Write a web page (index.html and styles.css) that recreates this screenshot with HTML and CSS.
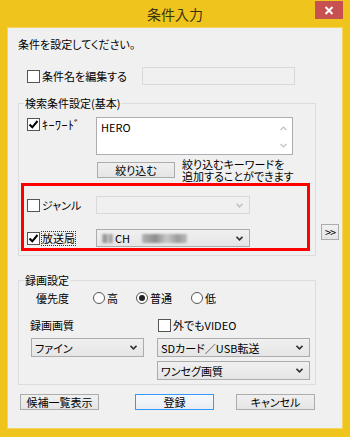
FILE: index.html
```html
<!DOCTYPE html>
<html lang="ja">
<head>
    <meta charset="UTF-8">
    <title>条件入力</title>
    <link rel="stylesheet" href="styles.css">
</head>
<body>
    <div class="window">
        <div class="titlebar">
            <div class="title">条件入力</div>
            <div class="close">
                <svg width="10" height="9" viewBox="0 0 10 9"><path d="M1.5 1 L8.5 8 M8.5 1 L1.5 8" /></svg>
            </div>
        </div>

        <div class="client">
            <p class="intro">条件を設定してください。</p>

            <div class="name-row">
                <label class="check name-check"><span class="box"></span>条件名を編集する</label>
                <div class="textbox"></div>
            </div>

            <div class="search-row">
                <fieldset class="group search">
                    <legend>検索条件設定(基本)</legend>
                    <div class="kw-row">
                        <label class="check kw-check"><span class="box on"><svg width="11" height="11" viewBox="0 0 11 11"><path d="M1.5 5.5 L4.3 8.3 L9.5 2" /></svg></span><span class="kw-text">ｷｰﾜｰﾄﾞ</span></label>
                        <div class="textarea">
                            <div class="ta-text">HERO</div>
                            <div class="ta-scroll">
                                <svg width="7" height="5" viewBox="0 0 7 5"><path d="M0.5 4 L3.5 1 L6.5 4" /></svg>
                                <svg width="7" height="5" viewBox="0 0 7 5"><path d="M0.5 1 L3.5 4 L6.5 1" /></svg>
                            </div>
                        </div>
                    </div>
                    <div class="narrow-row">
                        <button class="btn narrow">絞り込む</button>
                        <p class="hint">絞り込むキーワードを<br>追加することができます</p>
                    </div>
                    <div class="highlight">
                        <div class="sel-row">
                            <label class="check"><span class="box"></span>ジャンル</label>
                            <div class="combo disabled">
                                <span></span>
                                <svg class="chev" width="7" height="5" viewBox="0 0 7 5"><path d="M0.5 0.8 L3.5 3.8 L6.5 0.8" /></svg>
                            </div>
                        </div>
                        <div class="sel-row station-row">
                            <label class="check"><span class="box on"><svg width="11" height="11" viewBox="0 0 11 11"><path d="M1.5 5.5 L4.3 8.3 L9.5 2" /></svg></span><span class="focus">放送局</span></label>
                            <div class="combo">
                                <span class="combo-text"><span class="blur short"></span>CH<span class="blur long"></span></span>
                                <svg class="chev" width="7" height="5" viewBox="0 0 7 5"><path d="M0.5 0.8 L3.5 3.8 L6.5 0.8" /></svg>
                            </div>
                        </div>
                    </div>
                </fieldset>
                <button class="btn more">&gt;&gt;</button>
            </div>

            <fieldset class="group record">
                <legend>録画設定</legend>
                <div class="priority-row">
                    <span class="priority-label">優先度</span>
                    <label class="radio r-high"><span class="dot"></span>高</label>
                    <label class="radio r-normal"><span class="dot on"></span>普通</label>
                    <label class="radio"><span class="dot"></span>低</label>
                </div>
                <div class="quality-row">
                    <span class="quality-label">録画画質</span>
                    <label class="check"><span class="box"></span>外でもVIDEO</label>
                </div>
                <div class="combo-row">
                    <div class="combo quality">
                        <span class="combo-text">ファイン</span>
                        <svg class="chev" width="7" height="5" viewBox="0 0 7 5"><path d="M0.5 0.8 L3.5 3.8 L6.5 0.8" /></svg>
                    </div>
                    <div class="combo wide">
                        <span class="combo-text">SDカード／USB転送</span>
                        <svg class="chev" width="7" height="5" viewBox="0 0 7 5"><path d="M0.5 0.8 L3.5 3.8 L6.5 0.8" /></svg>
                    </div>
                </div>
                <div class="combo-row second">
                    <div class="combo wide">
                        <span class="combo-text">ワンセグ画質</span>
                        <svg class="chev" width="7" height="5" viewBox="0 0 7 5"><path d="M0.5 0.8 L3.5 3.8 L6.5 0.8" /></svg>
                    </div>
                </div>
            </fieldset>

            <div class="actions">
                <button class="btn">候補一覧表示</button>
                <button class="btn default">登録</button>
                <button class="btn">キャンセル</button>
            </div>
        </div>
    </div>
</body>
</html>
```

FILE: styles.css
```css
* {
    margin: 0;
    padding: 0;
    box-sizing: border-box;
}
body {
    width: 350px;
    height: 437px;
    overflow: hidden;
    background: #efc41c;
    font-family: "Noto Sans CJK JP", "Noto Sans", sans-serif;
    font-size: 11px;
    line-height: 16px;
    color: #000;
    font-feature-settings: "palt";
}
.titlebar {
    display: grid;
    grid-template-columns: 1fr auto 1fr;
    height: 28px;
}
.title {
    grid-column: 2;
    align-self: center;
    font-size: 14px;
    line-height: 18px;
    color: #3d3512;
}
.close {
    grid-column: 3;
    justify-self: end;
    align-self: start;
    display: flex;
    align-items: center;
    justify-content: center;
    width: 28px;
    height: 18px;
    margin: 1px 7px 0 0;
    background: #c75050;
}
.close path {
    stroke: #fff;
    stroke-width: 2;
    fill: none;
}
.client {
    height: 400px;
    margin: 0 8px;
    padding: 8px 0 0 10px;
    background: #f0f0f0;
    box-shadow: 0 0 0 1px #f3d560;
}
.intro {
    height: 16px;
}

/* checkboxes and radios */
.check {
    display: flex;
    align-items: center;
}
.box {
    display: flex;
    align-items: center;
    justify-content: center;
    width: 13px;
    height: 13px;
    margin-right: 2px;
    border: 1px solid #555;
    background: #fff;
}
.box path {
    stroke: #000;
    stroke-width: 2;
    fill: none;
}
.radio {
    display: flex;
    align-items: center;
}
.dot {
    display: flex;
    align-items: center;
    justify-content: center;
    width: 12px;
    height: 12px;
    margin-right: 2px;
    border: 1px solid #555;
    border-radius: 50%;
    background: #fff;
}
.dot.on::after {
    content: "";
    width: 6px;
    height: 6px;
    border-radius: 50%;
    background: #222;
}

/* inputs */
.name-row {
    display: flex;
    align-items: center;
    height: 18px;
    margin-top: 15px;
    padding-left: 9px;
}
.name-check {
    width: 115px;
}
.textbox {
    width: 153px;
    height: 18px;
    border: 1px solid #d9d9d9;
    background: #f0f0f0;
}
.textarea {
    display: flex;
    width: 197px;
    height: 38px;
    border: 1px solid #abadb3;
    background: #fff;
}
.ta-text {
    flex: 1;
    padding: 1px 4px;
}
.ta-scroll {
    display: flex;
    flex-direction: column;
    justify-content: space-between;
    align-items: center;
    width: 17px;
    padding: 8px 0 6px;
}
.ta-scroll path {
    stroke: #c2c2c2;
    stroke-width: 1.2;
    fill: none;
}
.combo {
    display: flex;
    align-items: center;
    justify-content: space-between;
    height: 19px;
    padding: 0 6px 0 3px;
    border: 1px solid #acacac;
    background: linear-gradient(#f0f0f0, #e5e5e5);
}
.combo-text {
    display: flex;
    align-items: center;
}
.chev path {
    stroke: #333;
    stroke-width: 1.6;
    fill: none;
}
.combo.disabled {
    border-color: #d9d9d9;
    background: #f0f0f0;
}
.combo.disabled .chev path {
    stroke: #c4c4c4;
}
.blur {
    display: inline-block;
    height: 9px;
    background: linear-gradient(90deg, #b4b4b4, #8c8c8c 30%, #c8c8c8 55%, #9a9a9a 80%, #bdbdbd);
    filter: blur(0.8px);
}
.blur.short {
    width: 11px;
    margin: 0 2px 0 2px;
}
.blur.long {
    width: 45px;
    margin-left: 12px;
}

/* buttons */
.btn {
    height: 16px;
    font: inherit;
    line-height: 14px;
    color: #000;
    border: 1px solid #acacac;
    background: linear-gradient(#f0f0f0, #e5e5e5);
}
.btn.default {
    border-color: #3399ff;
    background: linear-gradient(#f6f8fb, #e9eef4);
}

/* group boxes */
.group {
    width: 298px;
    padding: 0 0 4px 0;
    border: 1px solid #dcdcdc;
}
.group legend {
    margin-left: 5px;
    padding: 0 1px;
    line-height: 16px;
}
.search-row {
    display: flex;
    align-items: flex-start;
    margin-top: 10px;
}
.kw-row {
    display: flex;
    margin-top: 6px;
    padding-left: 8px;
}
.kw-check {
    align-items: flex-start;
    width: 69px;
    padding-top: 1px;
    line-height: 13px;
}
.kw-text {
    font-size: 12px;
    font-feature-settings: normal;
    letter-spacing: 0.5px;
}
.narrow-row {
    display: flex;
    align-items: center;
    height: 22px;
    margin-top: 4px;
    padding-left: 78px;
}
.narrow {
    width: 78px;
}
.hint {
    margin-left: 7px;
    line-height: 12px;
}
.highlight {
    width: 289px;
    margin: 2px 0 0 2px;
    padding: 10px 0 1px 3px;
    border: 3px solid #f00;
}
.sel-row {
    display: flex;
    align-items: center;
    height: 18px;
}
.sel-row .check {
    width: 69px;
}
.sel-row .combo {
    width: 154px;
    height: 18px;
}
.station-row {
    margin-top: 15px;
}
.focus {
    outline: 1px dotted #333;
    line-height: 13px;
}
.more {
    width: 18px;
    margin: 129px 0 0 5px;
    font-size: 11px;
    letter-spacing: -1px;
}

.record {
    margin-top: 16px;
}
.priority-row {
    display: flex;
    align-items: center;
    height: 16px;
    margin-top: 2px;
    padding-left: 17px;
}
.priority-label {
    width: 57px;
}
.r-high {
    width: 43px;
}
.r-normal {
    width: 55px;
}
.quality-row {
    display: flex;
    align-items: center;
    height: 16px;
    margin-top: 11px;
    padding-left: 11px;
}
.quality-label {
    width: 128px;
}
.combo-row {
    display: flex;
    gap: 13px;
    margin-top: 5px;
    padding-left: 12px;
}
.combo-row.second {
    margin-top: 4px;
    padding-left: 138px;
}
.combo.quality {
    width: 113px;
}
.combo.wide {
    width: 153px;
}

.actions {
    display: flex;
    margin-top: 9px;
    padding-left: 2px;
}
.actions .btn {
    width: 79px;
}
.actions .default {
    margin: 0 22px 0 36px;
}
```
